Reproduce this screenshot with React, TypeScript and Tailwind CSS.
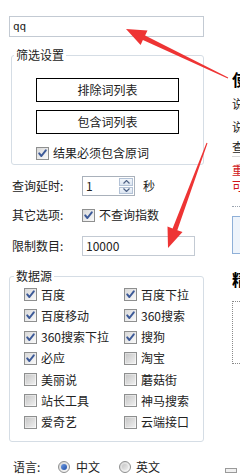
import React from "react";

function Check({ checked }: { checked: boolean }) {
  return (
    <span className="relative w-[13px] h-[13px] shrink-0 border border-[#8e8f8f] bg-gradient-to-br from-[#d9d9d9] to-[#fafafa] flex items-center justify-center">
      {checked ? (
        <svg width="11" height="11" viewBox="0 0 11 11">
          <path d="M2.2 5.4 L4.4 8 L8.8 2.4" fill="none" stroke="#3d5a98" strokeWidth="2" strokeLinecap="round" strokeLinejoin="round" />
        </svg>
      ) : (
        <span className="w-[9px] h-[9px] bg-gradient-to-br from-[#c8c8c8] to-[#eeeeee]" />
      )}
    </span>
  );
}

function Radio({ checked }: { checked: boolean }) {
  return (
    <span className="w-[12px] h-[12px] shrink-0 rounded-full border border-[#8e8f8f] bg-gradient-to-br from-[#d5d5d5] to-[#fbfbfb] flex items-center justify-center">
      {checked ? (
        <span className="w-[6px] h-[6px] rounded-full bg-gradient-to-br from-[#6f9ae0] to-[#1f4fa8]" />
      ) : (
        <span className="w-[6px] h-[6px] rounded-full bg-gradient-to-br from-[#c6c6c6] to-[#ececec]" />
      )}
    </span>
  );
}

const sources: [string, boolean][] = [
  ["百度", true],
  ["百度下拉", true],
  ["百度移动", true],
  ["360搜索", true],
  ["360搜索下拉", true],
  ["搜狗", true],
  ["必应", true],
  ["淘宝", false],
  ["美丽说", false],
  ["蘑菇街", false],
  ["站长工具", false],
  ["神马搜索", false],
  ["爱奇艺", false],
  ["云端接口", false],
];

export default function App() {
  return (
    <div className="relative w-[240px] h-[475px] overflow-hidden bg-white flex text-[12px] leading-[14px] text-[#222] [font-family:'Noto_Sans_CJK_SC','Microsoft_YaHei',sans-serif]">
      {/* Left column */}
      <div className="w-[224px] shrink-0 flex flex-col pt-[16px]">
        <div className="ml-[9px] w-[195px] h-[21px] border border-[#c3cad3] flex items-center px-[3px] text-[11px] [font-family:'DejaVu_Sans_Mono',monospace]">
          qq
        </div>

        <fieldset className="mt-[11px] ml-[11px] w-[193px] border border-[#d5dde5] rounded-[3px] pb-[4px]">
          <legend className="ml-[2px] px-[2px] leading-[14px]">筛选设置</legend>
          <div className="mt-[16px] ml-[24px] w-[143px] h-[24px] border border-black flex items-center justify-center">
            排除词列表
          </div>
          <div className="mt-[8px] ml-[24px] w-[143px] h-[24px] border border-black flex items-center justify-center">
            包含词列表
          </div>
          <div className="mt-[12px] ml-[24px] h-[14px] flex items-center gap-[4px]">
            <Check checked />
            <span>结果必须包含原词</span>
          </div>
        </fieldset>

        <div className="mt-[11px] h-[20px] flex items-center">
          <span className="ml-[12px] w-[70px]">查询延时:</span>
          <div className="w-[53px] h-[20px] border border-[#a9b1bb] flex items-stretch">
            <span className="flex-1 pl-[3px] flex items-center">1</span>
            <div className="w-[16px] flex flex-col gap-px p-px">
              <span className="flex-1 bg-gradient-to-b from-[#f2f6fb] to-[#dbe5f1] border border-[#b3c2d6] flex items-center justify-center">
                <svg width="7" height="4" viewBox="0 0 7 4"><path d="M0.5 3.5 L3.5 0.5 L6.5 3.5" fill="none" stroke="#4d6185" strokeWidth="1.2" /></svg>
              </span>
              <span className="flex-1 bg-gradient-to-b from-[#f2f6fb] to-[#dbe5f1] border border-[#b3c2d6] flex items-center justify-center">
                <svg width="7" height="4" viewBox="0 0 7 4"><path d="M0.5 0.5 L3.5 3.5 L6.5 0.5" fill="none" stroke="#4d6185" strokeWidth="1.2" /></svg>
              </span>
            </div>
          </div>
          <span className="ml-[8px]">秒</span>
        </div>

        <div className="mt-[9px] h-[20px] flex items-center">
          <span className="ml-[12px] w-[70px]">其它选项:</span>
          <Check checked />
          <span className="ml-[4px]">不查询指数</span>
        </div>

        <div className="mt-[11px] h-[20px] flex items-center">
          <span className="ml-[12px] w-[70px]">限制数目:</span>
          <div className="w-[113px] h-[20px] border border-[#c3cad3] pl-[3px] flex items-center">10000</div>
        </div>

        <fieldset className="mt-[13px] ml-[9px] w-[195px] border border-[#d5dde5] rounded-[3px] pb-[8px]">
          <legend className="ml-[4px] px-[2px] leading-[14px]">数据源</legend>
          <div className="mt-[1px] pl-[14px] grid grid-cols-[100px_1fr] auto-rows-[21.25px]">
            {sources.map(([name, on]) => (
              <div key={name} className="flex items-center gap-[4px]">
                <Check checked={on} />
                <span>{name}</span>
              </div>
            ))}
          </div>
        </fieldset>

        <div className="mt-[18px] h-[14px] flex items-center">
          <span className="ml-[13px] w-[45px]">语言:</span>
          <Radio checked />
          <span className="ml-[6px]">中文</span>
          <span className="ml-[19px]"><Radio checked={false} /></span>
          <span className="ml-[5px]">英文</span>
        </div>
      </div>

      {/* Right (clipped) panel */}
      <div className="flex-1 overflow-hidden pl-[8px] flex flex-col whitespace-nowrap">
        <div className="mt-[70px] text-[16px] leading-[18px] font-bold text-black">使用说明</div>
        <div className="mt-[9px]">说明文字一</div>
        <div className="mt-[9px]">说明文字二</div>
        <div className="mt-[6px]">查询说明</div>
        <div className="mt-[2px] h-px w-[40px] bg-[#d8d8d8]" />
        <div className="mt-[6px] text-[#d0161b]">重要提示</div>
        <div className="mt-[2px] text-[#d0161b]">可以使用</div>
        <div className="mt-[13px] w-[40px] border-t border-dotted border-[#9aa4b0]" />
        <div className="mt-[9px] w-[40px] h-[38px] border border-[#8fb0d8] bg-[#eef4fb]" />
        <div className="mt-[16px] text-[16px] leading-[18px] font-bold text-black">精确</div>
        <div className="mt-[13px] w-[40px] h-[63px] border border-dotted border-[#8a8a8a]" />
        <div className="mt-[104px] -ml-[7px] w-[12px] h-[5px] border border-[#9a9a9a] bg-[#f0f0f0]" />
      </div>

      {/* Red annotation arrows */}
      <svg className="absolute inset-0 pointer-events-none" width="240" height="475" viewBox="0 0 240 475">
        <polygon
          points="126,29 140.6,44.9 142.9,39.9 227.8,78.5 228.2,77.5 145.1,35.4 147.5,30.5"
          fill="#ee3434"
        />
        <polygon
          points="168,248 182.5,232.1 177.3,230.2 207.5,143.2 206.5,142.8 172.6,228.4 167.5,226.5"
          fill="#ee3434"
        />
      </svg>
    </div>
  );
}
